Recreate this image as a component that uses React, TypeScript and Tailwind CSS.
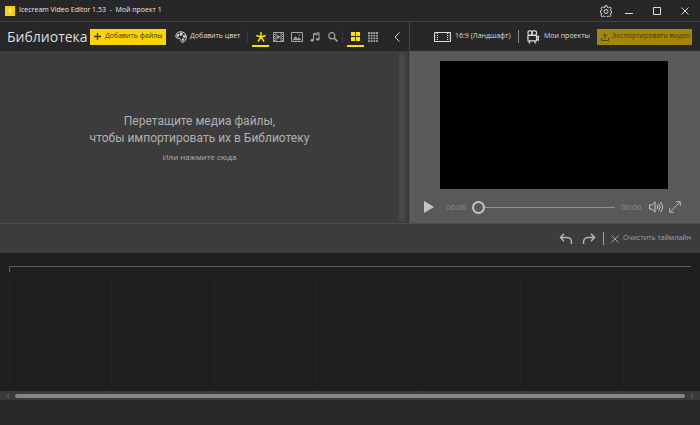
import React from "react";

const tools = "flex items-center justify-center border-b-2 pt-[2px] h-5 w-[17px] shrink-0";

function TitleBar() {
  return (
    <header className="flex h-[22px] items-center border-b border-[#444] bg-[#272727] pl-[5px] pr-2">
      <svg viewBox="0 0 10 10" className="size-[10px] shrink-0">
        <rect width="10" height="10" fill="#fdcf05" />
        <path d="M4 2.500h2v3.200L5 8 4 5.700z" fill="#fff3b0" />
      </svg>
      <h1 className="ml-1 flex-1 whitespace-nowrap text-[7px] text-[#e6e6e6]">Icecream Video Editor 1.53&nbsp; - &nbsp;Мой проект 1</h1>
      <div className="flex items-center text-[#dcdcdc]">
        <button aria-label="Настройки" className="mr-[13px]">
          <svg viewBox="0 0 24 24" className="size-3" fill="none" stroke="currentColor" strokeWidth="2">
            <path d="M10 1.500h4l.7 3.200 2.200.9 2.800-1.800 2.700 2.800-1.700 2.800.8 2.100 1.500.5v4l-1.800.3-.9 2.300 1.800 2.700-2.800 2.700-2.700-1.700-2.100.8-.5 1.500h-4l-.6-1.800-2.200-.9-2.700 1.700-2.800-2.700 1.700-2.800-.8-2.100-1.600-.5v-4l1.800-.4.9-2.200L2 6.400l2.700-2.700 2.800 1.700 2.100-.8z" />
            <circle cx="12" cy="13" r="4" />
          </svg>
        </button>
        <button aria-label="Свернуть" className="mr-5">
          <svg viewBox="0 0 8 12" className="h-3 w-2"><path d="M0 8.500h8" stroke="currentColor" /></svg>
        </button>
        <button aria-label="Развернуть" className="mr-5">
          <svg viewBox="0 0 8 8" className="size-2"><path d="M.5.5h7v7h-7z" fill="none" stroke="currentColor" /></svg>
        </button>
        <button aria-label="Закрыть" className="mr-[3px]">
          <svg viewBox="0 0 8 8" className="size-2"><path d="M.5.5l7 7m0-7l-7 7" stroke="currentColor" /></svg>
        </button>
      </div>
    </header>
  );
}

function LibraryBar() {
  return (
    <div className="flex h-[29px] items-center bg-[#272727] pl-[7px] pr-[9px]">
      <h2 className="w-[83px] shrink-0 whitespace-nowrap text-[14px] text-[#dedede]">Библиотека</h2>
      <button className="flex h-4 w-[76px] shrink-0 items-center gap-1 whitespace-nowrap bg-[#fdd406] pl-1 text-[7px] text-[#3c3405]">
        <svg viewBox="0 0 7 7" className="size-[7px] shrink-0"><path d="M3.500 0v7M0 3.500h7" stroke="currentColor" strokeWidth="1.300" /></svg>
        Добавить файлы
      </button>
      <button className="ml-[9px] flex w-[65px] shrink-0 items-center gap-[3px] whitespace-nowrap text-[7px] text-[#dcdcdc]">
        <svg viewBox="0 0 24 24" className="size-3 shrink-0" fill="none" stroke="currentColor" strokeWidth="2">
          <path d="M14 22.500C10 21 13 16.500 10 15 7 13.500 5 16 2.500 13 0 8 4 1.500 11.500 1.500 18 1.500 22.500 6 22.500 12c0 6-4 11-8.500 10.500z" />
          <path d="M10 4h4.500l-.5 4.500h-4zM16.500 8.500l4 .5v4l-4-.5zM14.500 15.500l4 .5-2.500 4.500zM4.500 7l3.500-.5v4l-4 .5z" fill="currentColor" strokeWidth="1" />
        </svg>
        Добавить цвет
      </button>
      <div className="ml-[7px] h-3 w-px shrink-0 bg-[#3c3c3c]" />
      <div className="ml-1 flex items-center gap-px text-[#a5a5a5]">
        <button aria-label="Все" className={tools + " border-[#fde004] text-[#fde004]"}>
          <svg viewBox="0 0 10 10" className="size-[10px]" stroke="currentColor" strokeWidth="1.500"><path d="M5 5V0M5 5L.3 3.500M5 5l4.700-1.500M5 5L2 9.500M5 5l3 4.500" /></svg>
        </button>
        <button aria-label="Видео" className={tools + " border-transparent"}>
          <svg viewBox="0 0 11 10" className="h-[10px] w-[11px]" fill="none" stroke="currentColor">
            <path d="M.5.500h10v9H.5z" /><path d="M3 0v10M8 0v10" /><path d="M1.500 0v10M9.500 0v10" strokeDasharray="1 1" /><path d="M4.500 3v4L7 5z" fill="currentColor" strokeWidth=".5" />
          </svg>
        </button>
        <button aria-label="Изображения" className={tools + " border-transparent"}>
          <svg viewBox="0 0 12 10" className="h-[10px] w-3" fill="none" stroke="currentColor">
            <path d="M.5.500h11v9H.5z" /><path d="M2 8l2.500-3.500L6.500 7 8 5.500 10 8z" fill="currentColor" strokeWidth=".4" /><circle cx="8.500" cy="3" r=".8" fill="currentColor" stroke="none" />
          </svg>
        </button>
        <button aria-label="Музыка" className={tools + " border-transparent"}>
          <svg viewBox="0 0 10 10" className="size-[10px]" fill="currentColor" stroke="currentColor"><path d="M3.500 8V1.500L9 .7v6.500M3.500 3L9 2.200" fill="none" /><ellipse cx="2.200" cy="8.300" rx="1.400" ry=".9" /><ellipse cx="7.700" cy="7.300" rx="1.400" ry=".9" /></svg>
        </button>
        <button aria-label="Поиск" className={tools + " border-transparent"}>
          <svg viewBox="0 0 10 10" className="size-[10px]" fill="none" stroke="currentColor"><circle cx="3.800" cy="3.800" r="3.100" strokeWidth="1.200" /><path d="M6 6l3.500 3.500" strokeWidth="1.600" /></svg>
        </button>
      </div>
      <div className="ml-px h-3 w-px shrink-0 bg-[#3c3c3c]" />
      <div className="ml-1 flex text-[#a5a5a5]">
        <button aria-label="Крупная сетка" className={tools + " border-[#fde004] text-[#fde004]"}>
          <svg viewBox="0 0 9 9" className="size-[9px]" fill="currentColor"><path d="M0 0h4v4H0zM5 0h4v4H5zM0 5h4v4H0zM5 5h4v4H5z" /></svg>
        </button>
        <button aria-label="Мелкая сетка" className={tools + " border-transparent"}>
          <svg viewBox="0 0 10 10" className="size-[10px]" stroke="currentColor" strokeWidth="1.800" strokeDasharray="1.900 .8"><path d="M0 1h10M0 3.700h10M0 6.400h10M0 9.100h10" /></svg>
        </button>
      </div>
      <button aria-label="Свернуть библиотеку" className="ml-auto text-[#d0d0d0]">
        <svg viewBox="0 0 6 10" className="h-[10px] w-[6px]" fill="none" stroke="currentColor"><path d="M5.500.5L1 5l4.500 4.500" /></svg>
      </button>
    </div>
  );
}

function ProjectBar() {
  return (
    <div className="flex h-[29px] items-center whitespace-nowrap bg-[#272727] pr-2 text-[7px] text-[#dcdcdc]">
      <button className="ml-6 flex w-[84px] shrink-0 items-center gap-1">
        <svg viewBox="0 0 17 10" className="h-[10px] w-[17px] shrink-0" fill="none" stroke="currentColor"><path d="M.5.500h16v9H.5z" /><path d="M3.500 1v8M13.500 1v8" strokeDasharray="1 1" /><path d="M2 1v8M15 1v8" strokeDasharray="1 1" opacity=".5" /></svg>
        16:9 (Ландшафт)
      </button>
      <div className="h-[13px] w-px bg-[#8a8a8a]" />
      <button className="ml-2 flex shrink-0 items-center gap-[5px]">
        <svg viewBox="0 0 12 14" className="h-[14px] w-3" fill="none" stroke="currentColor" strokeWidth="1.200"><rect x="1" y=".8" width="4" height="4.500" rx="1.500" /><rect x="5" y=".8" width="4.500" height="4.500" rx="1.500" /><path d="M1 5.300h8.500v5.500h-8.500zM9.500 7.500l2-1.200v4l-2-1.200M3 10.800L2 13.500M7.500 10.800l1 2.700M0 8h1" /></svg>
        Мои проекты
      </button>
      <button className="ml-auto flex h-4 w-[95px] shrink-0 items-center gap-[3px] bg-[#a18608] pl-1 text-[#4a3f08]">
        <svg viewBox="0 0 8 8" className="size-2 shrink-0" fill="none" stroke="currentColor"><path d="M.5 5v2.500h7V5M4 6V1M2 2.800L4 .8l2 2" /></svg>
        Экспортировать видео
      </button>
    </div>
  );
}

function Preview() {
  return (
    <div className="flex flex-1 flex-col border-l border-[#656565] bg-[#595959] px-[29px]">
      <div className="mt-[10px] aspect-[228/128] w-[228px] bg-black" />
      <div className="-ml-[17px] -mr-[10px] mt-2 flex h-5 items-center text-[8px] text-[#8e8e8e]">
        <button aria-label="Воспроизвести" className="ml-px text-[#c4c4c4]">
          <svg viewBox="0 0 10 12" className="h-3 w-[10px]" fill="currentColor"><path d="M0 0l10 6-10 6z" /></svg>
        </button>
        <span className="ml-3 w-[26px]">00:00</span>
        <input type="range" aria-label="Позиция" min="0" max="100" defaultValue="0" className="h-[13px] min-w-0 flex-1 appearance-none bg-[linear-gradient(#929292,#929292)] bg-[length:100%_1px] bg-center bg-no-repeat [&::-webkit-slider-thumb]:size-[13px] [&::-webkit-slider-thumb]:appearance-none [&::-webkit-slider-thumb]:rounded-full [&::-webkit-slider-thumb]:border-2 [&::-webkit-slider-thumb]:border-[#c6c6c6] [&::-webkit-slider-thumb]:bg-[#595959]" />
        <span className="ml-[6px] w-7">00:00</span>
        <button aria-label="Громкость" className="text-[#c9c9c9]">
          <svg viewBox="0 0 14 12" className="h-3 w-[14px]" fill="none" stroke="currentColor"><path d="M.5 4H3l3-3.200v10.400L3 8H.5zM8 4q1.500 2 0 4M9.800 2.500q2.800 3.500 0 7M11.500 1q4 5 0 10" /></svg>
        </button>
        <button aria-label="Во весь экран" className="ml-[6px] text-[#b5b5b5]">
          <svg viewBox="0 0 12 12" className="size-3" fill="none" stroke="currentColor"><path d="M1 11L11 1M7 .7h4.300V5M.7 7v4.300H5" /></svg>
        </button>
      </div>
    </div>
  );
}

export default function App() {
  return (
    <div className="flex min-h-screen flex-col bg-[#292929] font-['Open_Sans','Noto_Sans',sans-serif]">
      <TitleBar />
      <main className="flex flex-1 flex-col">
        <div className="flex h-[201px]">
          <section className="flex flex-1 flex-col border-r border-[#444]">
            <LibraryBar />
            <div className="flex flex-1 bg-[#3c3c3c] pr-1">
              <button className="flex flex-1 flex-col items-center justify-start pt-[62px] text-[#b0b0b0]">
                <span className="font-['Roboto',sans-serif] text-[12px] leading-[17px]">Перетащите медиа файлы,<br />чтобы импортировать их в Библиотеку</span>
                <span className="mt-1 text-[8px] leading-3">Или нажмите сюда</span>
              </button>
              <div className="my-[2px] w-[6px] bg-[#484848]" />
            </div>
          </section>
          <section className="flex w-[290px] shrink-0 flex-col">
            <ProjectBar />
            <Preview />
          </section>
        </div>
        <div className="flex h-[30px] items-center justify-end border-t border-[#4d4d4d] bg-[#3c3c3c] pr-[9px] text-[7px] text-[#b5b5b5]">
          <button aria-label="Отменить" className="mr-[9px]">
            <svg viewBox="0 0 14 12" className="h-3 w-[14px]" fill="none" stroke="currentColor" strokeWidth="1.500"><path d="M5 .8L1.500 4.500 5 8.200M1.500 4.500H8q5 0 4.500 6.500" /></svg>
          </button>
          <button aria-label="Повторить" className="mr-[7px]">
            <svg viewBox="0 0 14 12" className="h-3 w-[14px]" fill="none" stroke="currentColor" strokeWidth="1.500"><path d="M9 .8l3.500 3.700L9 8.200M12.500 4.500H6Q1 4.500 1.500 11" /></svg>
          </button>
          <div className="h-[13px] w-px bg-[#a0a0a0]" />
          <button className="ml-[7px] flex items-center gap-1 whitespace-nowrap text-[#a0a0a0]">
            <svg viewBox="0 0 8 8" className="size-2" stroke="currentColor"><path d="M.5.5l7 7m0-7l-7 7" /></svg>
            Очистить таймлайн
          </button>
        </div>
        <section aria-label="Таймлайн" className="flex h-[138px] flex-col bg-[#1e1e1e] px-[9px] pt-[13px]">
          <div className="h-[6px] border-l border-t border-[#5e5e5e]" />
          <div className="mb-[6px] mt-[7px] grid flex-1 grid-cols-[repeat(6,15%)_1fr]">
            {[0, 1, 2, 3, 4, 5, 6].map((i) => <div key={i} className="border-l border-[#252525]" />)}
          </div>
        </section>
        <div className="flex h-[9px] items-center bg-[#3a3a3a] text-[#555]">
          <button aria-label="Влево" className="flex w-[15px] shrink-0 justify-center"><svg viewBox="0 0 3 5" className="h-[5px] w-[3px]" fill="currentColor"><path d="M3 0v5L0 2.500z" /></svg></button>
          <div className="h-1 flex-1 rounded-full bg-[#868686]" />
          <button aria-label="Вправо" className="flex w-[15px] shrink-0 justify-center"><svg viewBox="0 0 3 5" className="h-[5px] w-[3px]" fill="currentColor"><path d="M0 0v5l3-2.500z" /></svg></button>
        </div>
      </main>
    </div>
  );
}
